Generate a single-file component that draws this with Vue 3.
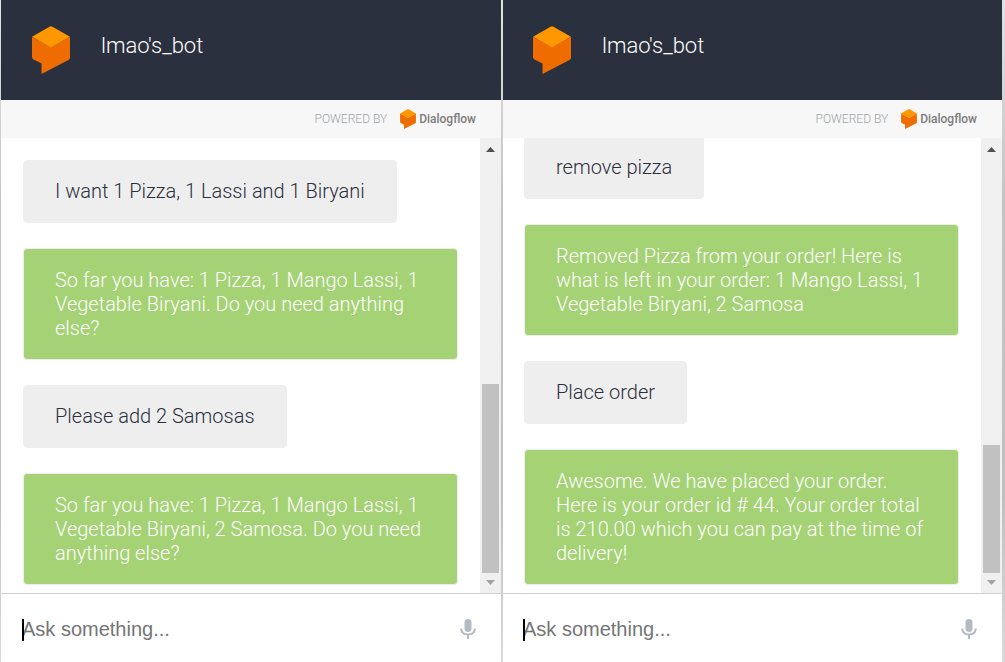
<script setup>
const chats = [
  {
    id: 'add',
    thumb: 189 / 415,
    messages: [
      { from: 'user', text: 'I want 1 Pizza, 1 Lassi and 1 Biryani' },
      { from: 'bot', text: 'So far you have: 1 Pizza, 1 Mango Lassi, 1 Vegetable Biryani. Do you need anything else?' },
      { from: 'user', text: 'Please add 2 Samosas' },
      { from: 'bot', text: 'So far you have: 1 Pizza, 1 Mango Lassi, 1 Vegetable Biryani, 2 Samosa. Do you need anything else?' },
    ],
  },
  {
    id: 'place',
    thumb: 128 / 415,
    messages: [
      { from: 'user', text: 'remove pizza' },
      { from: 'bot', text: 'Removed Pizza from your order! Here is what is left in your order: 1 Mango Lassi, 1 Vegetable Biryani, 2 Samosa' },
      { from: 'user', text: 'Place order' },
      { from: 'bot', text: 'Awesome. We have placed your order. Here is your order id # 44. Your order total is 210.00 which you can pay at the time of delivery!' },
    ],
  },
]
</script>

<template>
  <main class="page">
    <section v-for="chat in chats" :key="chat.id" class="panel">
      <header class="header">
        <svg class="logo" viewBox="0 0 38 48" aria-hidden="true">
          <path fill="#ef6c00" d="M0 11 19 21 38 11V31.500Q38 33 36.500 34L9.500 48V37.500L1.500 33.500Q0 32.500 0 31Z" />
          <path fill="#ff9800" d="M17.500.700Q19-.300 20.500.700L38 10.800 19 21.500 0 10.800Z" />
        </svg>
        <h1 class="title">lmao's_bot</h1>
      </header>

      <div class="powered">
        <span class="powered-label">POWERED BY</span>
        <a class="brand" href="#">
          <svg class="brand-logo" viewBox="0 0 38 48" aria-hidden="true">
            <path fill="#ef6c00" d="M0 11 19 21 38 11V31.500Q38 33 36.500 34L9.500 48V37.500L1.500 33.500Q0 32.500 0 31Z" />
            <path fill="#ff9800" d="M17.500.700Q19-.300 20.500.700L38 10.800 19 21.500 0 10.800Z" />
          </svg>
          <span>Dialogflow</span>
        </a>
      </div>

      <div class="conversation">
        <div class="messages">
          <p v-for="(m, i) in chat.messages" :key="i" class="bubble" :class="m.from">{{ m.text }}</p>
        </div>
        <div class="scrollbar" aria-hidden="true">
          <svg class="arrow" viewBox="0 0 21 20"><path fill="#505050" d="M6 14 10.500 9 15 14Z" /></svg>
          <div class="track">
            <div class="thumb" :style="{ height: chat.thumb * 100 + '%' }"></div>
          </div>
          <svg class="arrow" viewBox="0 0 21 20"><path fill="#a3a3a3" d="M6 7H15L10.500 12Z" /></svg>
        </div>
      </div>

      <form class="composer" @submit.prevent>
        <div class="field">
          <span class="caret" aria-hidden="true"></span>
          <input class="query" type="text" placeholder="Ask something..." aria-label="Ask something" />
        </div>
        <button class="mic" type="button" aria-label="Speak">
          <svg viewBox="0 0 16 22" aria-hidden="true">
            <rect x="4.500" y="1" width="7" height="13" rx="3.500" fill="#b4bac4" />
            <path d="M1.200 10.500Q1.600 16.500 8 16.500T14.800 10.500M8 16.500V21" fill="none" stroke="#b4bac4" stroke-width="2" />
          </svg>
        </button>
      </form>
    </section>
  </main>
</template>

<style>
body {
  margin: 0;
}
</style>

<style scoped>
.page {
  --edge: linear-gradient(#e2e2e2, #c4c4c4 30%, #c0c0c0 75%, #dadada);
  display: grid;
  grid-template-columns: 1fr 1fr;
  height: 100vh;
  box-sizing: border-box;
  border-right: 3px solid #d2d2d2;
  border-image: var(--edge) 1;
  background: #fff;
  font-family: Roboto, "Liberation Sans", sans-serif;
  font-weight: 300;
}
.panel {
  --inset: 22px;
  display: flex;
  flex-direction: column;
  min-width: 0;
  min-height: 0;
  border-left: 1px solid #c8c8c8;
  border-image: var(--edge) 1;
}
.panel + .panel {
  --inset: 21px;
  border-left-width: 2px;
}
.header {
  display: flex;
  align-items: center;
  gap: 31px;
  height: 100px;
  flex: none;
  box-sizing: border-box;
  padding-left: calc(var(--inset) + 9px);
  background: #2b303e;
}
.logo {
  width: 38px;
  height: 48px;
}
.title {
  margin: 0 0 8px;
  color: #fff;
  font-size: 22px;
  line-height: 28px;
  font-weight: 300;
}
.powered {
  display: flex;
  align-items: center;
  justify-content: flex-end;
  gap: 13px;
  height: 38px;
  flex: none;
  padding-right: 25px;
  background: #f7f7f7;
}
.powered-label {
  color: #a0a4a9;
  font-size: 12px;
}
.brand {
  display: flex;
  align-items: center;
  gap: 3px;
  color: #7c7c7c;
  font-size: 12px;
  font-weight: 500;
  text-decoration: none;
}
.brand-logo {
  width: 16px;
  height: 20px;
}
.conversation {
  display: flex;
  flex: 1;
  min-height: 0;
}
.messages {
  display: flex;
  flex: 1;
  flex-direction: column;
  align-items: flex-start;
  justify-content: flex-end;
  gap: 25px;
  min-width: 0;
  overflow: hidden;
  padding: 0 22px 8px var(--inset);
}
.bubble {
  flex: none;
  box-sizing: border-box;
  margin: 0;
  padding: 19px 31px;
  border: 1px solid #eee;
  border-radius: 4px;
  font-size: 20px;
  line-height: 24px;
}
.user {
  padding-top: 18px;
  background: #eee;
  color: #2b303e;
}
.bot {
  width: 100%;
  background: #a4d274;
  color: #fff;
}
.scrollbar {
  display: flex;
  flex-direction: column;
  width: 21px;
  flex: none;
  background: #f0f0f0;
}
.arrow {
  width: 21px;
  height: 20px;
  flex: none;
}
.track {
  display: flex;
  flex: 1;
  flex-direction: column;
  justify-content: flex-end;
  padding: 0 2px;
}
.thumb {
  background: #c1c1c1;
}
.composer {
  display: flex;
  align-items: center;
  height: 68px;
  flex: none;
  box-sizing: content-box;
  padding: 0 25px 0 calc(var(--inset) - 1px);
  border-top: 1px solid #d0d0d0;
}
.field {
  position: relative;
  display: flex;
  flex: 1;
  align-items: center;
  min-width: 0;
  padding-top: 2px;
}
.caret {
  position: absolute;
  left: 0;
  top: 6px;
  width: 2px;
  height: 22px;
  background: #000;
}
.query {
  width: 100%;
  height: 28px;
  padding: 0;
  border: 0;
  outline: 0;
  background: transparent;
  color: #2b303e;
  font: 400 20px/28px "Liberation Sans", Arial, sans-serif;
}
.query::placeholder {
  color: #757575;
  opacity: 1;
}
.mic {
  display: flex;
  padding: 2px 0 0;
  border: 0;
  background: none;
}
.mic svg {
  width: 16px;
  height: 22px;
}
</style>
